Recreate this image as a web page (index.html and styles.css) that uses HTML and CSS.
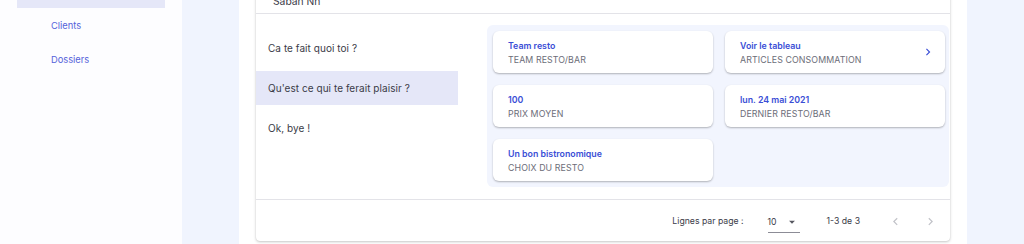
FILE: index.html
```html
<!DOCTYPE html>
<html lang="fr">
<head>
<meta charset="utf-8">
<title>Questions</title>
<link rel="stylesheet" href="styles.css">
</head>
<body>
<div class="layout">
  <aside class="sidebar">
    <nav class="nav">
      <a class="nav-item nav-item--active"></a>
      <a class="nav-item">Clients</a>
      <a class="nav-item">Dossiers</a>
    </nav>
  </aside>
  <div class="rail"></div>
  <main class="content">
    <section class="card">
      <header class="card-header">Saban Nh</header>
      <div class="card-body">
        <ul class="question-list">
          <li class="question">Ca te fait quoi toi ?</li>
          <li class="question question--selected">Qu'est ce qui te ferait plaisir ?</li>
          <li class="question">Ok, bye !</li>
        </ul>
        <div class="answers">
          <div class="answer">
            <div class="answer-text">
              <div class="answer-title">Team resto</div>
              <div class="answer-label">TEAM RESTO/BAR</div>
            </div>
          </div>
          <div class="answer">
            <div class="answer-text">
              <div class="answer-title">Voir le tableau</div>
              <div class="answer-label">ARTICLES CONSOMMATION</div>
            </div>
            <svg class="answer-chevron" viewBox="0 0 24 24" width="14" height="14"><path d="M8.6 16.6 13.2 12 8.6 7.4 10 6l6 6-6 6z" fill="currentColor"/></svg>
          </div>
          <div class="answer">
            <div class="answer-text">
              <div class="answer-title">100</div>
              <div class="answer-label">PRIX MOYEN</div>
            </div>
          </div>
          <div class="answer">
            <div class="answer-text">
              <div class="answer-title">lun. 24 mai 2021</div>
              <div class="answer-label">DERNIER RESTO/BAR</div>
            </div>
          </div>
          <div class="answer">
            <div class="answer-text">
              <div class="answer-title">Un bon bistronomique</div>
              <div class="answer-label">CHOIX DU RESTO</div>
            </div>
          </div>
        </div>
      </div>
      <footer class="pagination">
        <span class="pagination-label">Lignes par page :</span>
        <span class="pagination-select">
          <span>10</span>
          <svg viewBox="0 0 24 24" width="14" height="14"><path d="M7 10l5 5 5-5z" fill="currentColor"/></svg>
        </span>
        <span class="pagination-range">1-3 de 3</span>
        <span class="pagination-btn">
          <svg viewBox="0 0 24 24" width="15" height="15"><path d="M15.4 7.4 14 6l-6 6 6 6 1.4-1.4-4.6-4.6z" fill="currentColor"/></svg>
        </span>
        <span class="pagination-btn">
          <svg viewBox="0 0 24 24" width="15" height="15"><path d="M8.6 16.6 13.2 12 8.6 7.4 10 6l6 6-6 6z" fill="currentColor"/></svg>
        </span>
      </footer>
    </section>
  </main>
  <div class="rail"></div>
</div>
</body>
</html>
```

FILE: styles.css
```css
* { box-sizing: border-box; }

html, body {
  margin: 0;
  padding: 0;
  width: 1024px;
  height: 244px;
  overflow: hidden;
  background: #ffffff;
  font-family: "Inter", "Noto Sans", sans-serif;
  color: #3a3b47;
}

.layout {
  display: flex;
  height: 244px;
}

.sidebar {
  width: 182px;
  flex: none;
  background: #fdfdff;
}

.nav {
  display: flex;
  flex-direction: column;
  margin-top: -26px;
}

.nav-item {
  height: 34px;
  margin: 0 17px;
  padding-left: 34px;
  display: flex;
  align-items: center;
  font-size: 9.3px;
  color: #5563da;
  text-decoration: none;
}

.nav-item--active {
  background: #e5e7f8;
}

.rail {
  width: 57px;
  flex: none;
  background: #f0f4fe;
}

.content {
  flex: 1;
  padding: 0 17px;
  background: #ffffff;
}

.card {
  margin-top: -20px;
  background: #fff;
  border-radius: 4px;
  box-shadow: 0 1px 3px rgba(0, 0, 0, 0.22), 0 0 1px rgba(0, 0, 0, 0.12);
}

.card-header {
  height: 34px;
  display: flex;
  align-items: flex-end;
  padding: 0 0 5px 17px;
  font-size: 10.3px;
  line-height: 13px;
  border-bottom: 1px solid #e3e3e8;
}

.card-body {
  display: flex;
  align-items: flex-start;
}

.question-list {
  list-style: none;
  margin: 0;
  padding: 17px 0 0;
  width: 202px;
  flex: none;
  display: flex;
  flex-direction: column;
  gap: 6px;
}

.question {
  height: 34px;
  display: flex;
  align-items: center;
  padding-left: 12px;
  font-size: 10px;
  letter-spacing: 0.05px;
  color: #3a3b47;
}

.question--selected {
  background: #e5e7f8;
}

.answers {
  flex: 1;
  margin: 11px 1px 12px 29px;
  padding: 6px 4px 6px 6px;
  background: #f2f5fe;
  border-radius: 6px;
  display: grid;
  grid-template-columns: 1fr 1fr;
  grid-auto-rows: 42px;
  gap: 12px;
}

.answer {
  background: #fff;
  border-radius: 6px;
  box-shadow: 0 1px 2px rgba(0, 0, 0, 0.28);
  display: flex;
  align-items: center;
  padding: 0 15px;
}

.answer-text {
  flex: 1;
  display: flex;
  flex-direction: column;
  gap: 3px;
  padding-top: 1px;
}

.answer-title {
  font-size: 8.8px;
  line-height: 11px;
  font-weight: 600;
  color: #3a4ed6;
}

.answer-label {
  font-size: 8.8px;
  line-height: 11px;
  letter-spacing: 0.1px;
  color: #6c6d78;
}

.answer-chevron {
  color: #3a4ed6;
  margin-right: -5px;
}

.pagination {
  height: 42px;
  border-top: 1px solid #e3e3e8;
  display: flex;
  align-items: center;
  justify-content: flex-end;
  padding-right: 2px;
  padding-top: 1px;
  font-size: 8.7px;
  color: #3a3b47;
}

.pagination-select {
  margin-left: 24px;
  width: 32px;
  height: 22px;
  display: flex;
  align-items: center;
  justify-content: space-between;
  border-bottom: 1px solid #8c8c96;
  margin-top: 2px;
}

.pagination-select svg {
  color: #55565f;
  margin-right: 1px;
}

.pagination-range {
  margin-left: 27px;
  margin-right: 18px;
}

.pagination-btn {
  width: 35px;
  display: flex;
  justify-content: center;
  color: #c2c3c9;
}
```
